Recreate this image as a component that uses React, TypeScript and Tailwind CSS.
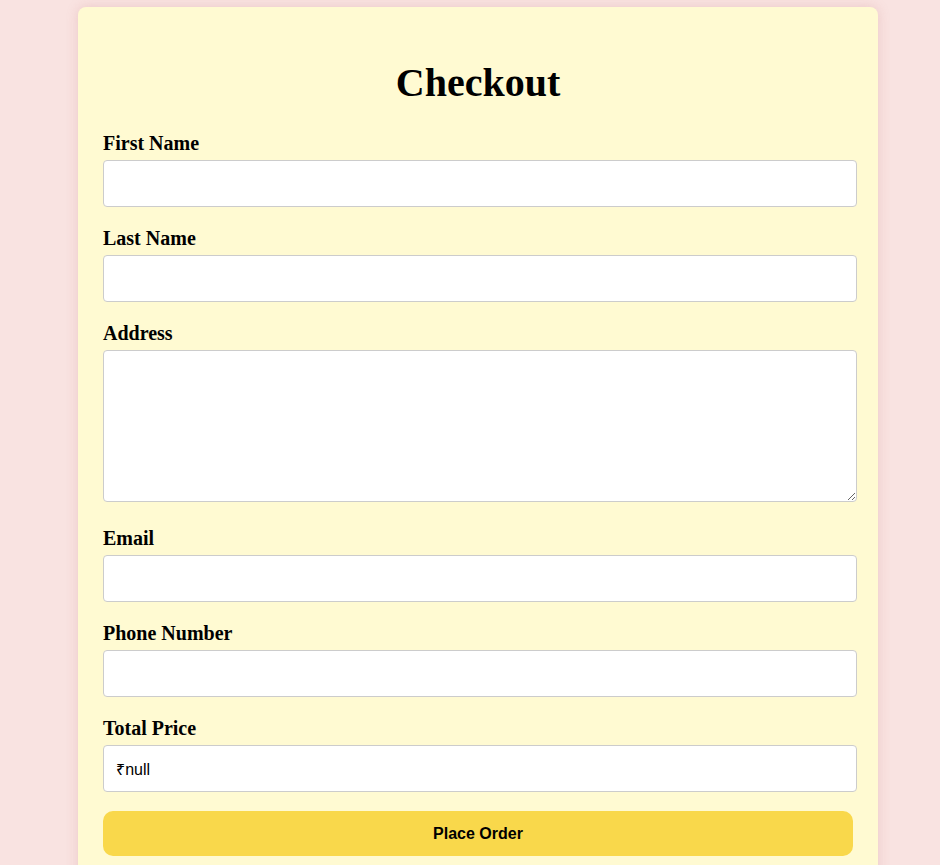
import React from "react";

function Label({ children }: { children: React.ReactNode }) {
  return (
    <label className="block font-['Liberation_Serif','Times_New_Roman',serif] text-[20px] font-bold leading-[23px] text-black mb-[5px]">
      {children}
    </label>
  );
}

function Input({ value }: { value?: string }) {
  return (
    <input
      className="block w-[754px] h-[47px] px-[12px] border border-[#cccccc] rounded-[4px] bg-white font-['Liberation_Sans','Noto_Sans',Arial,sans-serif] text-[16px] text-black outline-none mb-[20px]"
      defaultValue={value}
      readOnly={value !== undefined}
    />
  );
}

export default function App() {
  return (
    <div className="h-[865px] overflow-hidden bg-[#f9e3e1]">
      <div className="pt-[7px] pl-[78px]">
        <div className="w-[800px] h-[900px] bg-[#fffad2] rounded-[8px] shadow-[0_0_12px_rgba(200,120,120,0.25)] px-[25px] pt-[53px]">
          <h1 className="font-['Liberation_Serif','Times_New_Roman',serif] text-[40px] font-bold leading-[46px] text-center text-black mb-[26px]">
            Checkout
          </h1>
          <Label>First Name</Label>
          <Input />
          <Label>Last Name</Label>
          <Input />
          <Label>Address</Label>
          <textarea className="block w-[754px] h-[152px] px-[12px] py-[10px] border border-[#cccccc] rounded-[4px] bg-white font-['Liberation_Sans','Noto_Sans',Arial,sans-serif] text-[16px] outline-none mb-[25px]" />
          <Label>Email</Label>
          <Input />
          <Label>Phone Number</Label>
          <Input />
          <Label>Total Price</Label>
          <Input value={"₹null"} />
          <button className="block w-[750px] h-[45px] rounded-[10px] bg-[#f9d84b] font-['Liberation_Sans',Arial,sans-serif] text-[16px] font-bold text-black mt-[-1px]">
            Place Order
          </button>
        </div>
      </div>
    </div>
  );
}
